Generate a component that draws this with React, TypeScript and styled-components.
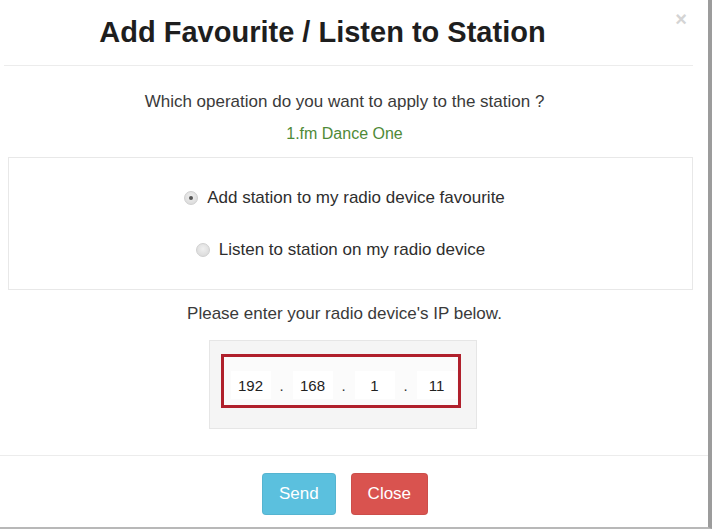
import React, { useState } from "react";
import styled, { createGlobalStyle } from "styled-components";

const GlobalStyle = createGlobalStyle`
  html, body {
    margin: 0;
    padding: 0;
    background: #ffffff;
    font-family: "Liberation Sans", Arial, sans-serif;
  }
`;

const Modal = styled.div`
  width: 708px;
  height: 527px;
  background: #ffffff;
  border-right: 4px solid #9c9c9c;
  border-bottom: 2px solid #b8b8b8;
  display: flex;
  flex-direction: column;
  color: #333;
`;

const Header = styled.div`
  height: 65px;
  border-bottom: 1px solid #ececec;
  margin: 0 15px 0 4px;
  display: flex;
  align-items: center;
  position: relative;
`;

const Title = styled.h2`
  flex: 1;
  margin: 0;
  padding: 0 52px 0 0;
  text-align: center;
  font-size: 29px;
  font-weight: 700;
  color: #1e1e1e;
`;

const CloseX = styled.span`
  position: absolute;
  right: 6px;
  top: 8px;
  font-size: 20px;
  font-weight: 700;
  color: #d4d4d4;
`;

const Body = styled.div`
  display: flex;
  flex-direction: column;
  align-items: stretch;
  padding: 26px 15px 26px 8px;
  border-bottom: 1px solid #ececec;
`;

const TextLine = styled.p<{ $green?: boolean; $mt?: number; $size?: number }>`
  margin: ${(p) => p.$mt ?? 0}px 0 0;
  padding-right: 12px;
  text-align: center;
  font-size: ${(p) => p.$size ?? 17}px;
  line-height: 20px;
  color: ${(p) => (p.$green ? "#4f8a37" : "#3a3a3a")};
`;

const Panel = styled.div`
  margin-top: 13px;
  border: 1px solid #e8e8e8;
  padding: 30px 12px 29px 0;
  display: flex;
  flex-direction: column;
  align-items: center;
  gap: 32px;
`;

const RadioRow = styled.label<{ $shift: number }>`
  display: flex;
  align-items: center;
  gap: 9px;
  font-size: 17px;
  line-height: 20px;
  color: #2e2e2e;
  cursor: pointer;
  margin-left: ${(p) => p.$shift}px;
`;

const RadioDot = styled.span<{ $checked: boolean }>`
  width: 12px;
  height: 12px;
  border-radius: 50%;
  background: radial-gradient(circle at 50% 40%, #f0f0f0, #d6d6d6);
  border: 1px solid #d0d0d0;
  display: flex;
  align-items: center;
  justify-content: center;
  &::after {
    content: "";
    width: 4px;
    height: 4px;
    border-radius: 50%;
    background: ${(p) => (p.$checked ? "#555" : "transparent")};
  }
`;

const Well = styled.div`
  align-self: center;
  margin: 16px 0 0 -16px;
  width: 268px;
  height: 89px;
  box-sizing: border-box;
  background: #f5f5f5;
  border: 1px solid #e6e6e6;
  padding: 13px 15px 0 11px;
`;

const IpBox = styled.div`
  height: 54px;
  box-sizing: border-box;
  border: 3px solid #b0202c;
  background: #fbfbfb;
  display: flex;
  align-items: center;
  padding: 8px 0 0 7px;
`;

const IpInput = styled.input`
  width: 40px;
  height: 28px;
  box-sizing: border-box;
  border: none;
  background: #ffffff;
  text-align: center;
  font-family: "Liberation Sans", Arial, sans-serif;
  font-size: 15px;
  color: #222;
  padding: 0;
  outline: none;
`;

const IpDot = styled.span`
  width: 22px;
  text-align: center;
  font-size: 15px;
  color: #333;
`;

const Footer = styled.div`
  display: flex;
  justify-content: center;
  gap: 15px;
  padding: 17px 18px 0 0;
`;

const Button = styled.button<{ $color: string }>`
  height: 42px;
  padding: 0 16px;
  border: 1px solid rgba(0, 0, 0, 0.06);
  border-radius: 4px;
  background: ${(p) => p.$color};
  color: #ffffff;
  font-family: "Liberation Sans", Arial, sans-serif;
  font-size: 17px;
  cursor: pointer;
`;

const options = [
  { key: "fav", label: "Add station to my radio device favourite", shift: 0 },
  { key: "listen", label: "Listen to station on my radio device", shift: -8 },
];

export default function App() {
  const [choice, setChoice] = useState("fav");
  const [ip, setIp] = useState(["192", "168", "1", "11"]);

  return (
    <>
      <GlobalStyle />
      <Modal>
        <Header>
          <Title>Add Favourite / Listen to Station</Title>
          <CloseX>×</CloseX>
        </Header>
        <Body>
          <TextLine>Which operation do you want to apply to the station ?</TextLine>
          <TextLine $green $mt={12} $size={16}>1.fm Dance One</TextLine>
          <Panel>
            {options.map((o) => (
              <RadioRow key={o.key} $shift={o.shift} onClick={() => setChoice(o.key)}>
                <RadioDot $checked={choice === o.key} />
                {o.label}
              </RadioRow>
            ))}
          </Panel>
          <TextLine $mt={14}>Please enter your radio device's IP below.</TextLine>
          <Well>
            <IpBox>
              {ip.map((part, i) => (
                <React.Fragment key={i}>
                  {i > 0 && <IpDot>.</IpDot>}
                  <IpInput
                    value={part}
                    onChange={(e) => {
                      const next = [...ip];
                      next[i] = e.target.value;
                      setIp(next);
                    }}
                  />
                </React.Fragment>
              ))}
            </IpBox>
          </Well>
        </Body>
        <Footer>
          <Button $color="#5bc0de">Send</Button>
          <Button $color="#d9534f">Close</Button>
        </Footer>
      </Modal>
    </>
  );
}
